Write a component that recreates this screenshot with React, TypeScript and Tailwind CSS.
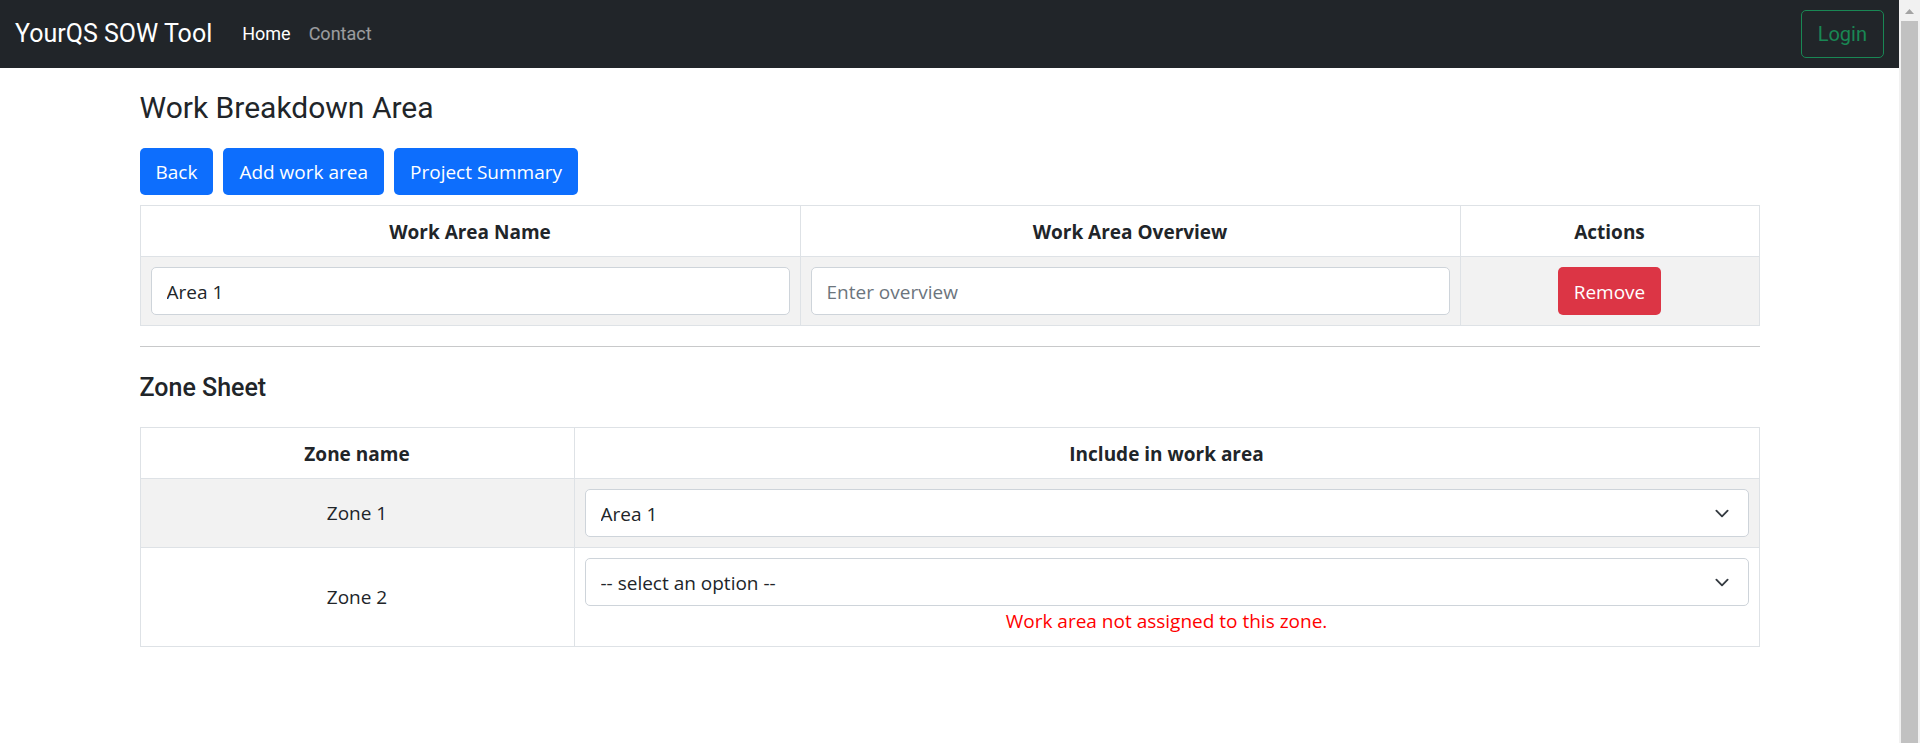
import { useState } from "react";

const primaryButton =
  "rounded-[5px] bg-[#0d6efd] px-4 py-2 h-[47px] text-[19px] leading-[30px] text-white hover:bg-[#0b5ed7]";
const headCell =
  "border border-[#dee2e6] px-[10px] pt-[11px] pb-[9px] text-center text-[19px] leading-[30px] font-bold";
const bodyCell = "border border-[#dee2e6] p-[10px] text-center";
const field =
  "block h-12 w-full rounded-[5px] border border-[#ced4da] bg-white px-[15px] pt-[2px] text-[19px] leading-[30px] text-[#212529] placeholder:text-[#6c757d]";

function ZoneSelect({ label, initial }: { label: string; initial: string }) {
  const [value, setValue] = useState(initial);
  return (
    <div className="grid items-center">
      <select
        aria-label={label}
        value={value}
        onChange={(e) => setValue(e.target.value)}
        className={`${field} col-start-1 row-start-1 appearance-none`}
      >
        <option value="" disabled>
          -- select an option --
        </option>
        <option value="area-1">Area 1</option>
      </select>
      <svg
        viewBox="0 0 16 16"
        className="pointer-events-none col-start-1 row-start-1 mr-[17px] h-[15px] w-5 justify-self-end"
        fill="none"
        stroke="#343a40"
        strokeWidth="2"
        strokeLinecap="round"
        strokeLinejoin="round"
        aria-hidden="true"
      >
        <path d="m2 5 6 6 6-6" />
      </svg>
    </div>
  );
}

export default function App() {
  const [name, setName] = useState("Area 1");
  const [overview, setOverview] = useState("");

  return (
    <div className="flex min-h-screen bg-white font-['Open_Sans',sans-serif] text-[#212529]">
      <div className="min-w-0 flex-1">
        <nav className="flex items-center bg-[#212529] px-[15px] py-[10px] font-[Roboto,sans-serif]">
          <a href="#" className="mr-5 text-[25px] leading-[38px] text-white">
            YourQS SOW Tool
          </a>
          <div className="flex gap-[18px] px-[10px] text-[18px] leading-[30px]">
            <a href="#" className="text-white">
              Home
            </a>
            <a href="#contact" className="text-white/55">
              Contact
            </a>
          </div>
          <button
            type="button"
            className="ml-auto h-12 rounded-[5px] border border-[#198754] px-4 text-[20px] leading-[30px] text-[#198754]"
          >
            Login
          </button>
        </nav>

        <main className="mx-auto max-w-[1650px] px-[15px] pt-5">
          <h1 className="mb-5 font-[Roboto,sans-serif] text-[30px] leading-10 font-normal">
            Work Breakdown Area
          </h1>

          <div className="mb-[10px] flex gap-[10px]">
            <button type="button" className={primaryButton}>
              Back
            </button>
            <button type="button" className={primaryButton}>
              Add work area
            </button>
            <button type="button" className={primaryButton}>
              Project Summary
            </button>
          </div>

          <table className="w-full table-fixed border-collapse">
            <colgroup>
              <col />
              <col />
              <col className="w-[299px]" />
            </colgroup>
            <thead>
              <tr>
                <th className={headCell}>Work Area Name</th>
                <th className={headCell}>Work Area Overview</th>
                <th className={headCell}>Actions</th>
              </tr>
            </thead>
            <tbody>
              <tr className="bg-[#f2f2f2]">
                <td className={bodyCell}>
                  <input
                    type="text"
                    aria-label="Work Area Name"
                    value={name}
                    onChange={(e) => setName(e.target.value)}
                    className={field}
                  />
                </td>
                <td className={bodyCell}>
                  <input
                    type="text"
                    aria-label="Work Area Overview"
                    placeholder="Enter overview"
                    value={overview}
                    onChange={(e) => setOverview(e.target.value)}
                    className={field}
                  />
                </td>
                <td className={bodyCell}>
                  <button
                    type="button"
                    className="mx-auto block h-12 rounded-[5px] bg-[#dc3545] px-4 pt-[2px] text-[19px] leading-[30px] text-white"
                  >
                    Remove
                  </button>
                </td>
              </tr>
            </tbody>
          </table>

          <hr className="my-5 border-t border-[#c8c9ca]" />

          <h2 className="mb-[18px] font-[Roboto,sans-serif] text-[25px] leading-[42px] font-medium">Zone Sheet</h2>

          <table className="w-full table-fixed border-collapse">
            <colgroup>
              <col className="w-[434px]" />
              <col />
            </colgroup>
            <thead>
              <tr>
                <th className={headCell}>Zone name</th>
                <th className={headCell}>Include in work area</th>
              </tr>
            </thead>
            <tbody className="text-[19px] leading-[30px]">
              <tr className="bg-[#f2f2f2]">
                <td className={bodyCell}>Zone 1</td>
                <td className={bodyCell}>
                  <ZoneSelect label="Work area for Zone 1" initial="area-1" />
                </td>
              </tr>
              <tr>
                <td className={bodyCell}>Zone 2</td>
                <td className={bodyCell}>
                  <ZoneSelect label="Work area for Zone 2" initial="" />
                  <p className="text-[#ff0000]">Work area not assigned to this zone.</p>
                </td>
              </tr>
            </tbody>
          </table>
        </main>
      </div>

      <div className="sticky top-0 flex h-screen w-[21px] flex-col bg-[#f1f1f1] px-[2px]" aria-hidden="true">
        <svg viewBox="0 0 17 21" className="h-[21px] w-[17px] shrink-0" fill="#a3a3a3">
          <path d="M4 14 8.5 9 13 14Z" />
        </svg>
        <div className="flex-1 bg-[#c1c1c1]" />
      </div>
    </div>
  );
}
